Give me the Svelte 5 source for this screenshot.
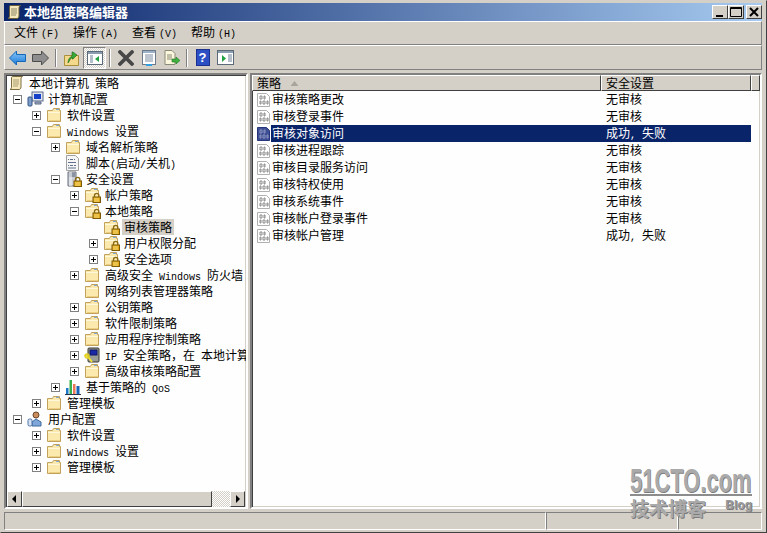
<script>
  const tree = [
    { level: 0, text: '本地计算机 策略', icon: 'scroll' },
    { level: 1, text: '计算机配置', icon: 'computer', exp: '-' },
    { level: 2, text: '软件设置', icon: 'folder', exp: '+' },
    { level: 2, text: 'Windows 设置', icon: 'folder', exp: '-' },
    { level: 3, text: '域名解析策略', icon: 'folder', exp: '+' },
    { level: 3, text: '脚本(启动/关机)', icon: 'script' },
    { level: 3, text: '安全设置', icon: 'safe', exp: '-' },
    { level: 4, text: '帐户策略', icon: 'lock', exp: '+' },
    { level: 4, text: '本地策略', icon: 'lock', exp: '-' },
    { level: 5, text: '审核策略', icon: 'lock', selected: true },
    { level: 5, text: '用户权限分配', icon: 'lock', exp: '+' },
    { level: 5, text: '安全选项', icon: 'lock', exp: '+' },
    { level: 4, text: '高级安全 Windows 防火墙', icon: 'folder', exp: '+' },
    { level: 4, text: '网络列表管理器策略', icon: 'folder' },
    { level: 4, text: '公钥策略', icon: 'folder', exp: '+' },
    { level: 4, text: '软件限制策略', icon: 'folder', exp: '+' },
    { level: 4, text: '应用程序控制策略', icon: 'folder', exp: '+' },
    { level: 4, text: 'IP 安全策略，在 本地计算机', icon: 'ipsec', exp: '+' },
    { level: 4, text: '高级审核策略配置', icon: 'folder', exp: '+' },
    { level: 3, text: '基于策略的 QoS', icon: 'chart', exp: '+' },
    { level: 2, text: '管理模板', icon: 'folder', exp: '+' },
    { level: 1, text: '用户配置', icon: 'user', exp: '-' },
    { level: 2, text: '软件设置', icon: 'folder', exp: '+' },
    { level: 2, text: 'Windows 设置', icon: 'folder', exp: '+' },
    { level: 2, text: '管理模板', icon: 'folder', exp: '+' }
  ];

  const rows = [
    ['审核策略更改', '无审核'],
    ['审核登录事件', '无审核'],
    ['审核对象访问', '成功, 失败', true],
    ['审核进程跟踪', '无审核'],
    ['审核目录服务访问', '无审核'],
    ['审核特权使用', '无审核'],
    ['审核系统事件', '无审核'],
    ['审核帐户登录事件', '无审核'],
    ['审核帐户管理', '成功, 失败']
  ];

  // latin runs are half width in the original bitmap font
  const split = (s) => s.split(/([\x00-\x7f]+)/).filter(Boolean);
  const isLatin = (s) => /^[\x00-\x7f]+$/.test(s);
</script>

{#snippet mixed(s)}
  {#each split(s) as part}
    {#if isLatin(part)}<span class="mono">{part}</span>{:else}{part}{/if}
  {/each}
{/snippet}

{#snippet folder()}
  <path d="M1.500 3.500h5l1-2h6v2h1v11h-13z" fill="#fbe9ae" stroke="#c0a25c" />
  <path d="M2 5h12v1H2z" fill="#fff8dc" />
  <path d="M10 2h3v1h-3z" fill="#7ea6d6" />
  <path d="M3 13h11v1H3z" fill="#eccf80" />
{/snippet}

{#snippet padlock()}
  <path d="M10.500 10.500v-2a2.200 2.200 0 0 1 4.400 0v2" fill="none" stroke="#8a6a10" stroke-width="1.300" />
  <rect x="9" y="10" width="7.500" height="5.500" fill="#e0a818" stroke="#7c5a08" />
  <path d="M10 12h5M10 14h5" stroke="#f7dc7c" />
{/snippet}

{#snippet treeIcon(kind)}
  <svg class="ticon" width="17" height="16" viewBox="0 0 17 16">
    {#if kind === 'folder'}
      {@render folder()}
    {:else if kind === 'lock'}
      {@render folder()}
      {@render padlock()}
    {:else if kind === 'scroll'}
      <path d="M4.500 1.500h10c-1 .5-1.500 1.500-1.500 2.500v8c0 1.500-1 2.500-2 2.500H2c1-.5 1.500-1.500 1.500-2.500V4c0-1.500 0-2.500 1-2.500z" fill="#f4e8bc" stroke="#7c6c40" />
      <path d="M5 5h6M5 7h6M5 9h6M5 11h5" stroke="#a89c70" />
    {:else if kind === 'script'}
      <path d="M1.500 .5h9l3 3v12h-12z" fill="#f6f6f6" stroke="#a0a0a0" />
      <path d="M3 4.500h1M5 4.500h3M9 4.500h1M3 7.500h8M3 10.500h1M5 10.500h3M9 10.500h2M3 13h8" stroke="#60708c" />
    {:else if kind === 'safe'}
      <path d="M3 1h8v14H3z" fill="#c9ccd4" stroke="#68707c" />
      <path d="M4 3h6M4 5h6" stroke="#4a5a70" />
      <rect x="4" y="1" width="3" height="14" fill="#eef0f4" opacity=".6" />
      {@render padlock()}
    {:else if kind === 'computer'}
      <rect x="5" y="1" width="11" height="9" fill="#dfe4ee" stroke="#5a6a8a" />
      <rect x="7" y="3" width="7" height="5" fill="#1540c8" />
      <path d="M8 11h6v2H8z" fill="#a8b0c0" stroke="#5a6a8a" />
      <rect x="1" y="6" width="4" height="9" rx="1" fill="#7d9cc8" stroke="#33558a" />
    {:else if kind === 'user'}
      <circle cx="9" cy="4" r="3" fill="#c98e5c" stroke="#6a4428" />
      <path d="M5 15v-4l4-3 5 3v4z" fill="#7fa6d8" stroke="#3f6aa0" />
      <rect x="1" y="8" width="4" height="7" rx="1.500" fill="#d8e4f4" stroke="#4a70a8" />
    {:else if kind === 'ipsec'}
      <rect x="4" y="1" width="11" height="14" rx="1" fill="#9a9c96" stroke="#34342e" />
      <rect x="6" y="3" width="7" height="5" fill="#1828a8" stroke="#101860" />
      <path d="M1 8l3 2 4 5" fill="none" stroke="#f2e030" stroke-width="2" />
      <circle cx="3" cy="9" r="2" fill="none" stroke="#e2d020" stroke-width="1.400" />
    {:else if kind === 'chart'}
      <path d="M1 9h2.500v6H1z" fill="#1e78c8" />
      <path d="M4.500 1h2.500v14H4.500z" fill="#38b04c" />
      <path d="M8 5h2.500v10H8z" fill="#e87858" />
      <path d="M11.500 7h3v8h-3z" fill="#1a64b8" />
      <path d="M0 15.500h16" stroke="#24344c" />
    {/if}
  </svg>
{/snippet}

{#snippet docIcon(sel)}
  <svg class="dicon" width="14" height="16" viewBox="0 0 14 16">
    <path d="M.5 1.500h9l3 3v10H.5z" fill={sel ? '#3f4f94' : '#fff'} stroke={sel ? '#26357c' : '#b0b0b0'} />
    <path d="M3 4h2v3H3zM7 4h1v3H7zM3 9h1v3H3zM6 9h2v3H6zM10 9h1v3h-1z" fill="none" stroke={sel ? '#8a94c0' : '#8a8a8a'} />
  </svg>
{/snippet}

<div class="window">
  <div class="titlebar">
    <svg class="tlogo" width="16" height="16" viewBox="0 0 16 16">
      <path d="M4.500 1.500h10c-1 .5-1.500 1.500-1.500 2.500v8c0 1.500-1 2.500-2 2.500H2c1-.5 1.500-1.500 1.500-2.500V4c0-1.500 0-2.500 1-2.500z" fill="#f4e8bc" stroke="#6c5f38" />
      <path d="M5 5h6M5 7h6M5 9h6M5 11h5" stroke="#8c8468" />
    </svg>
    <span class="ttext">本地组策略编辑器</span>
    <div class="wbtns">
      <button class="wbtn" aria-label="min"><svg width="14" height="12" viewBox="0 0 14 12"><path d="M3 9h7v2H3z" /></svg></button>
      <button class="wbtn" aria-label="max"><svg width="14" height="12" viewBox="0 0 14 12"><path d="M1.500 1.500h11v9h-11zM1 2.500h12" fill="none" stroke="#000" /></svg></button>
      <button class="wbtn close" aria-label="close"><svg width="14" height="12" viewBox="0 0 14 12"><path d="M3 2l8 8M11 2l-8 8" stroke="#000" stroke-width="2" /></svg></button>
    </div>
  </div>

  <div class="bar menubar">
    <span>文件<i>(F)</i></span>
    <span>操作<i>(A)</i></span>
    <span>查看<i>(V)</i></span>
    <span>帮助<i>(H)</i></span>
  </div>

  <div class="bar toolbar">
    <span class="tb"><svg width="17" height="16" viewBox="0 0 17 16"><defs><linearGradient id="ba" x1="0" y1="0" x2="0" y2="1"><stop offset="0" stop-color="#8cc8f8" /><stop offset="1" stop-color="#1878d8" /></linearGradient></defs><path d="M.5 8l7-7v3.500h9v7h-9V15z" fill="url(#ba)" stroke="#1468b8" /></svg></span>
    <span class="tb"><svg width="17" height="16" viewBox="0 0 17 16"><path d="M16.500 8l-7-7v3.500h-9v7h9V15z" fill="#8e8e8e" stroke="#4c4c4c" /></svg></span>
    <span class="sep"></span>
    <span class="tb"><svg width="15" height="16" viewBox="0 0 15 16"><path d="M.5 5.500h14v10H.5z" fill="#f4d88c" stroke="#a8903c" /><path d="M4 13c0-4 2-6 4-7V2h1l4 3-4 4H8V7c-1 1-2 3-4 6z" fill="#38a838" stroke="#186818" stroke-width=".6" /></svg></span>
    <span class="tb pressed">
      <svg width="16" height="14" viewBox="0 0 16 14"><rect x=".5" y=".5" width="15" height="13" fill="#fff" stroke="#5a6a78" /><rect x="1" y="1" width="14" height="2" fill="#8c9cb0" /><path d="M3 5h3M3 7h3M3 9h3M3 11h3" stroke="#6a8098" /><path d="M12 5v6L8 8z" fill="#20a040" /></svg>
    </span>
    <span class="sep"></span>
    <span class="tb"><svg width="16" height="16" viewBox="0 0 16 16"><path d="M2 2l12 12M14 2L2 14" stroke="#484848" stroke-width="3.800" stroke-linecap="round" /></svg></span>
    <span class="tb"><svg width="16" height="16" viewBox="0 0 16 16"><rect x="1.500" y=".5" width="13" height="14" fill="#fff" stroke="#6a7a8a" /><rect x="2" y="1" width="12" height="2" fill="#9cb0c8" /><path d="M4 5h8M4 7h8M4 9h8M4 11h8" stroke="#7a8aa0" /><path d="M5 15h6" stroke="#30a0e0" stroke-width="2" /></svg></span>
    <span class="tb"><svg width="18" height="16" viewBox="0 0 18 16"><path d="M2 .5h7l3 3v11H2z" fill="#fbf6dc" stroke="#8a8a78" /><path d="M4 5h5M4 7h5M4 9h5" stroke="#8a8a78" /><path d="M9 9h4V7l4 3.500L13 14v-2H9z" fill="#40b040" stroke="#207820" stroke-width=".6" /></svg></span>
    <span class="sep"></span>
    <span class="tb"><span class="help">?</span></span>
    <span class="tb"><svg width="17" height="15" viewBox="0 0 17 15"><rect x=".5" y=".5" width="16" height="14" fill="#fff" stroke="#5a6a78" /><rect x="1" y="1" width="15" height="2" fill="#8c9cb0" /><path d="M11 5h4M11 7h4M11 9h4M11 11h4" stroke="#6a8098" /><path d="M5 5v7l4-3.500z" fill="#20a040" /></svg></span>
  </div>

  <div class="panes">
    <div class="left sunken">
      <div class="treebody">
        {#each tree as t}
          <div class="trow" style="padding-left: {t.level === 0 ? 2 : 7 + (t.level - 1) * 19}px">
            {#if t.level > 0}
              {#if t.exp}
                <span class="exp">
                  <svg width="9" height="9" viewBox="0 0 9 9"><rect x=".5" y=".5" width="8" height="8" fill="#fff" stroke="#808080" /><path d={t.exp === '+' ? 'M2 4.500h5M4.500 2v5' : 'M2 4.500h5'} stroke="#000" /></svg>
                </span>
              {:else}
                <span class="exp"></span>
              {/if}
            {/if}
            {@render treeIcon(t.icon)}
            <span class="tlabel" class:sel={t.selected}>{@render mixed(t.text)}</span>
          </div>
        {/each}
      </div>
      <div class="hscroll">
        <span class="sbtn"><svg width="5" height="8" viewBox="0 0 5 8"><path d="M4 0v8L0 4z" /></svg></span>
        <span class="thumb"></span>
        <span class="track"></span>
        <span class="sbtn"><svg width="5" height="8" viewBox="0 0 5 8"><path d="M1 0v8l4-4z" /></svg></span>
      </div>
    </div>

    <div class="right sunken">
      <div class="lhead">
        <span class="hcol c1">策略<svg width="9" height="5" viewBox="0 0 9 5"><path d="M4.500 0l4 5h-8z" fill="#a8a49c" /></svg></span>
        <span class="hcol c2">安全设置</span>
        <span class="hcol c3"></span>
      </div>
      {#each rows as r}
        <div class="lrow">
          {@render docIcon(r[2])}
          <div class="lcells" class:active={r[2]}>
            <span class="lname">{r[0]}</span>
            <span class="lval">{@render mixed(r[1])}</span>
          </div>
        </div>
      {/each}
    </div>
  </div>

  <div class="status">
    <span class="cell s1"></span>
    <span class="cell s2"></span>
    <span class="cell s3"></span>
  </div>

  <div class="wm">
    <div class="wm1">51CTO.com</div>
    <div class="wmline"></div>
    <div class="wm2"><span>技术博客</span><b>Blog</b></div>
  </div>
</div>

<style>
  :global(body) {
    margin: 0;
    background: #d4d0c8;
  }
  .window {
    position: relative;
    box-sizing: border-box;
    width: 767px;
    height: 533px;
    padding: 2px 4px 2px 3px;
    background: #d4d0c8;
    border: 1px solid;
    border-color: #d4d0c8 #404040 #404040 #d4d0c8;
    font-family: "Noto Sans CJK SC", sans-serif;
    font-size: 12px;
    color: #000;
    display: flex;
    flex-direction: column;
    overflow: hidden;
  }
  .mono {
    font-family: "Liberation Mono", monospace;
    font-size: 10px;
    white-space: pre;
  }
  .titlebar {
    height: 18px;
    flex: none;
    display: flex;
    align-items: center;
    padding: 0 0 0 2px;
    background: linear-gradient(to right, #0a246a, #a6caf0);
    color: #fff;
  }
  .tlogo {
    flex: none;
    margin-right: 2px;
  }
  .ttext {
    font-size: 13px;
    font-weight: 700;
    line-height: 18px;
  }
  .wbtns {
    margin-left: auto;
    display: flex;
  }
  .wbtn {
    width: 16px;
    height: 14px;
    padding: 0;
    margin: 0;
    background: #d4d0c8;
    border: 1px solid;
    border-color: #fff #404040 #404040 #fff;
    display: flex;
    align-items: center;
    justify-content: center;
  }
  .wbtn.close {
    margin-left: 2px;
  }
  .bar {
    flex: none;
    display: flex;
    align-items: center;
    box-sizing: border-box;
    border: 1px solid;
    border-color: #fff #808080 #808080 #fff;
  }
  .menubar {
    height: 24px;
    padding: 1px 0 0 9px;
    gap: 14px;
  }
  .menubar span {
    display: block;
    line-height: 16px;
  }
  .menubar i {
    font-style: normal;
    font-family: "Liberation Mono", monospace;
    font-size: 10px;
    margin-left: 3px;
  }
  .toolbar {
    height: 25px;
    padding-left: 1px;
  }
  .tb {
    width: 23px;
    height: 22px;
    flex: none;
    box-sizing: border-box;
    display: flex;
    align-items: center;
    justify-content: center;
  }
  .sep {
    width: 8px;
    height: 18px;
    flex: none;
    box-sizing: border-box;
    border-left: 3px solid transparent;
    border-right: 3px solid transparent;
    background: linear-gradient(to right, #808080 50%, #fff 50%) content-box;
  }
  .pressed {
    border: 1px solid;
    border-color: #808080 #fff #fff #808080;
    background: repeating-conic-gradient(#fff 0 25%, #d4d0c8 0 50%) 0 0 / 2px 2px;
  }
  .help {
    width: 14px;
    height: 17px;
    background: #2c50c4;
    border: 1px solid #1c3090;
    box-sizing: border-box;
    color: #fff;
    text-align: center;
    font: 700 13px/15px "Liberation Sans", sans-serif;
  }
  .panes {
    flex: 1;
    min-height: 0;
    display: flex;
    margin-top: 3px;
    gap: 2px;
  }
  .sunken {
    box-sizing: border-box;
    border: 2px solid;
    border-color: #808080 #fff #fff #808080;
    background: #fefefe;
    box-shadow: inset 1px 1px 0 #404040, inset -1px -1px 0 #d4d0c8;
  }
  .left {
    width: 244px;
    display: flex;
    flex-direction: column;
  }
  .treebody {
    flex: 1;
    min-height: 0;
    overflow: hidden;
  }
  .trow {
    height: 16px;
    display: flex;
    align-items: center;
    white-space: nowrap;
  }
  .exp {
    width: 9px;
    height: 9px;
    flex: none;
    display: block;
    margin-right: 5px;
  }
  .exp svg {
    display: block;
  }
  .ticon {
    flex: none;
    margin-right: 2px;
  }
  .tlabel {
    height: 16px;
    line-height: 16px;
    padding: 0 2px;
  }
  .tlabel.sel {
    background: #d4d0c8;
  }
  .hscroll {
    height: 16px;
    flex: none;
    display: flex;
    margin: 0 1px 0 1px;
  }
  .sbtn {
    width: 15px;
    box-sizing: border-box;
    flex: none;
    background: #d4d0c8;
    border: 1px solid;
    border-color: #fff #404040 #404040 #fff;
    display: flex;
    align-items: center;
    justify-content: center;
  }
  .thumb {
    width: 190px;
    box-sizing: border-box;
    flex: none;
    background: #d4d0c8;
    border: 1px solid;
    border-color: #fff #404040 #404040 #fff;
  }
  .track {
    flex: 1;
    background: repeating-conic-gradient(#fff 0 25%, #d4d0c8 0 50%) 0 0 / 2px 2px;
  }
  .right {
    flex: 1;
    min-width: 0;
    overflow: hidden;
  }
  .lhead {
    display: flex;
    height: 16px;
    line-height: 14px;
  }
  .hcol {
    box-sizing: border-box;
    background: #d4d0c8;
    border: 1px solid;
    border-color: #fff #404040 #404040 #fff;
    padding-left: 4px;
    display: flex;
    align-items: center;
    gap: 9px;
  }
  .c1 {
    width: 349px;
  }
  .c2 {
    width: 150px;
  }
  .c3 {
    flex: 1;
  }
  .lrow {
    height: 17px;
    display: flex;
    align-items: center;
    padding-left: 5px;
  }
  .dicon {
    flex: none;
  }
  .lcells {
    width: 480px;
    height: 17px;
    display: flex;
    line-height: 16px;
  }
  .lcells.active {
    background: #0a246a;
    color: #fff;
  }
  .lname {
    width: 329px;
    padding-left: 1px;
    box-sizing: content-box;
  }
  .lval {
    padding-left: 5px;
    white-space: nowrap;
  }
  .status {
    height: 18px;
    flex: none;
    margin-top: 3px;
    display: flex;
  }
  .cell {
    box-sizing: border-box;
    border: 1px solid;
    border-color: #808080 #fff #fff #808080;
  }
  .s1 {
    width: 542px;
  }
  .s2 {
    width: 132px;
  }
  .s3 {
    flex: 1;
  }
  /* watermark sits over the list and the status bar */
  .wm {
    position: absolute;
    left: 629px;
    top: 465px;
    width: 122px;
    color: #aaa;
    z-index: 2;
  }
  .wm1 {
    font: 700 34px/28px "Liberation Sans", sans-serif;
    transform: scaleX(.645);
    transform-origin: left;
    white-space: nowrap;
    text-shadow: 1px 1px 0 #7c7c7c;
  }
  .wmline {
    height: 2px;
    background: #8c8c8c;
  }
  .wm2 {
    display: flex;
    justify-content: space-between;
    font-size: 19px;
    font-weight: 700;
    line-height: 24px;
    text-shadow: 1px 1px 0 #7c7c7c;
  }
  .wm2 b {
    font: 700 12px/15px "Liberation Sans", sans-serif;
    margin-top: 2px;
    color: #999;
  }
</style>
